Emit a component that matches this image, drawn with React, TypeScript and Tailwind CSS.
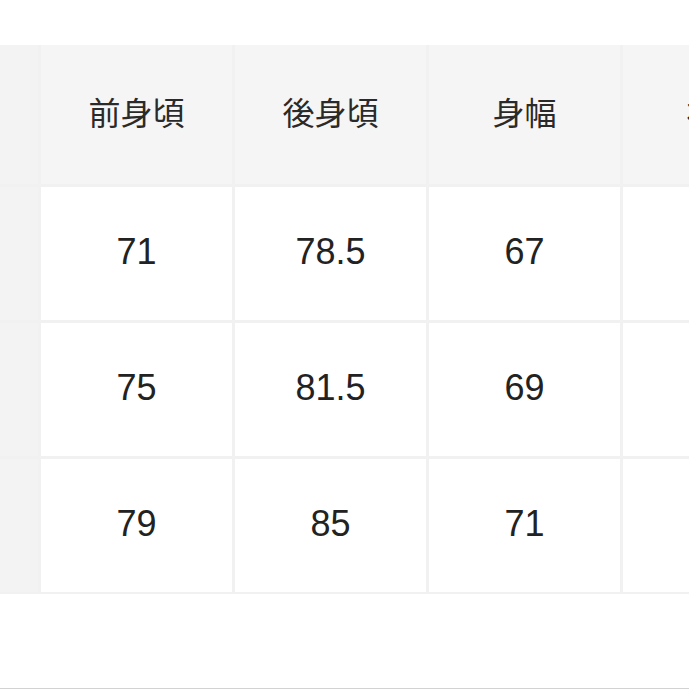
const HEADERS = ['前身頃', '後身頃', '身幅', '袖丈']

const ROWS = [
  ['71', '78.5', '67', '60'],
  ['75', '81.5', '69', '61'],
  ['79', '85', '71', '62'],
]

export default function App() {
  return (
    <div className="flex h-screen w-full flex-col overflow-hidden border-b border-[#d2d2d2] bg-white">
      <div className="mt-[45px] overflow-hidden">
        <div className="grid w-max grid-cols-[38px_191px_191px_191px_191px] grid-rows-[139px_133px_133px_133px] gap-[3px] bg-[#f1f1f1] pb-[2px]">
          {/* label column — only its right edge fits on screen */}
          <div className="bg-[#f3f3f3]" />
          {HEADERS.map((h) => (
            <div
              key={h}
              className="flex items-center justify-center bg-[#f5f5f5] pb-2 text-[32px] text-[#2a2a2a] font-['Noto_Sans_CJK_JP',sans-serif]"
            >
              {h}
            </div>
          ))}
          {ROWS.map((row, i) => (
            <Row key={i} values={row} />
          ))}
        </div>
      </div>
    </div>
  )
}

function Row({ values }: { values: string[] }) {
  return (
    <>
      <div className="bg-[#f3f3f3]" />
      {values.map((v, j) => (
        <div
          key={j}
          className="flex items-center justify-center bg-white pb-1 text-[36px] text-[#222] font-['Liberation_Sans',sans-serif]"
        >
          {v}
        </div>
      ))}
    </>
  )
}
